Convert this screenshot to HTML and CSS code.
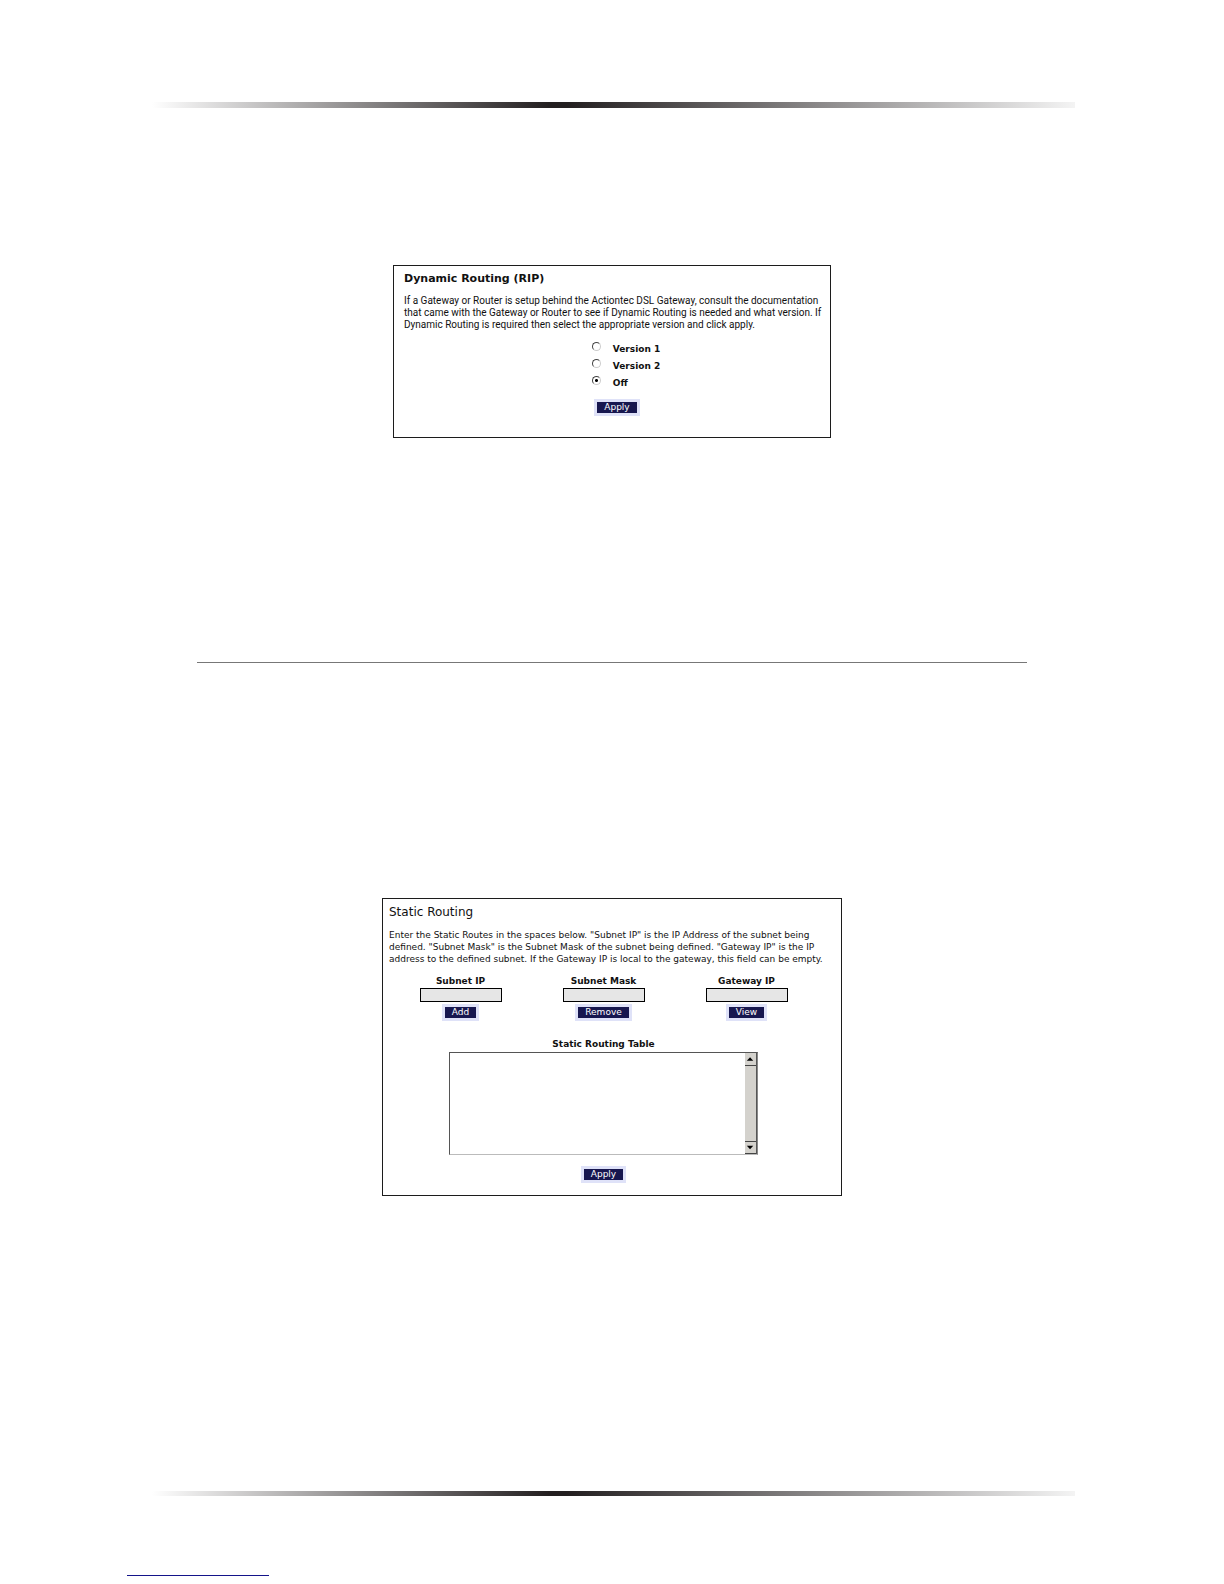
FILE: index.html
```html
<!DOCTYPE html>
<html lang="en">
<head>
  <meta charset="UTF-8" />
  <meta name="viewport" content="width=device-width, initial-scale=1" />
  <title>Dynamic Routing and Static Routing</title>
  <link rel="stylesheet" href="styles.css">
</head>
<body>
  <div class="page-bar"></div>

  <form class="panel dynamic">
    <h2>Dynamic Routing (RIP)</h2>
    <p>
      If a Gateway or Router is setup behind the Actiontec DSL Gateway, consult the documentation<br>
      that came with the Gateway or Router to see if Dynamic Routing is needed and what version. If<br>
      Dynamic Routing is required then select the appropriate version and click apply.
    </p>
    <div class="versions">
      <label><input type="radio" name="rip" value="1"><span>Version 1</span></label>
      <label><input type="radio" name="rip" value="2"><span>Version 2</span></label>
      <label><input type="radio" name="rip" value="off" checked><span>Off</span></label>
    </div>
    <button type="button">Apply</button>
  </form>

  <hr class="divider">

  <form class="panel static">
    <h2>Static Routing</h2>
    <p>
      Enter the Static Routes in the spaces below. "Subnet IP" is the IP Address of the subnet being<br>
      defined. "Subnet Mask" is the Subnet Mask of the subnet being defined. "Gateway IP" is the IP<br>
      address to the defined subnet. If the Gateway IP is local to the gateway, this field can be empty.
    </p>
    <div class="fields">
      <div class="field">
        <label for="subnet-ip">Subnet IP</label>
        <input type="text" id="subnet-ip">
        <button type="button">Add</button>
      </div>
      <div class="field">
        <label for="subnet-mask">Subnet Mask</label>
        <input type="text" id="subnet-mask">
        <button type="button">Remove</button>
      </div>
      <div class="field">
        <label for="gateway-ip">Gateway IP</label>
        <input type="text" id="gateway-ip">
        <button type="button">View</button>
      </div>
    </div>
    <label class="table-label" for="routing-table">Static Routing Table</label>
    <div class="table-box">
      <textarea id="routing-table"></textarea>
      <div class="scroller">
        <svg viewBox="0 0 12 12"><path d="M2 8h7L5.500 4z" /></svg>
        <svg viewBox="0 0 12 12"><path d="M2 4h7L5.500 8z" /></svg>
      </div>
    </div>
    <button type="button">Apply</button>
  </form>

  <div class="page-bar bottom"></div>
  <div class="footer-line"></div>
</body>
</html>
```

FILE: styles.css
```css
* {
  box-sizing: border-box;
}

body {
  margin: 0;
  padding-top: 102px;
  background: #fff;
  color: #111;
  font-family: Verdana, "DejaVu Sans", sans-serif;
  font-size: 9px;
  line-height: 12px;
}

/* Gradient bars at the top and bottom of the page */
.page-bar {
  height: 6px;
  margin: 0 149px 0 152px;
  background: linear-gradient(to right, #fff, #231f20 43%, #231f20 45%, #f4f4f4);
}

.page-bar.bottom {
  height: 5px;
  margin-top: 295px;
}

.divider {
  height: 1px;
  margin: 224px 197px 235px;
  border: 0;
  background: #777;
}

.footer-line {
  width: 142px;
  height: 1px;
  margin: 79px 0 0 127px;
  background: #14148a;
}

/* Panels */
.panel {
  display: flex;
  flex-direction: column;
  align-items: center;
  margin: 0 auto;
  border: 1px solid #1c1c1c;
}

.panel h2,
.panel p {
  align-self: flex-start;
  white-space: nowrap;
}

.panel h2 {
  margin: 5px 0 8px;
  font-size: 11px;
  line-height: 16px;
}

.panel p {
  margin: 0;
}

.dynamic {
  width: 438px;
  margin-top: 157px;
  padding: 0 0 21px 10px;
}

.dynamic p {
  font-family: Roboto, sans-serif;
  font-size: 10px;
}

.static {
  width: 460px;
  padding: 0 23px 12px 6px;
}

.static h2 {
  margin-bottom: 9px;
  font-size: 12px;
  font-weight: normal;
}

button {
  height: 17px;
  padding: 0 7px;
  border: 3px solid #dfe2f8;
  background: #17174f;
  color: #fff;
  font: inherit;
  line-height: 11px;
}

/* Version choices */
.versions {
  margin: 9px 0 8px;
  padding-left: 18px;
}

.versions label {
  display: flex;
  gap: 12px;
  height: 17px;
  font-weight: bold;
}

.versions span {
  padding-top: 3px;
}

.versions input {
  appearance: none;
  width: 9px;
  height: 9px;
  margin: 2px 0 0;
  border: 1px solid;
  border-color: #444 #ccc #ccc #444;
  border-radius: 50%;
}

.versions input:checked {
  background: radial-gradient(circle, #000 1px, #fff 2px);
}

/* Route fields */
.fields {
  display: grid;
  grid-template-columns: repeat(3, 1fr);
  width: 100%;
  margin-top: 10px;
}

.field {
  display: flex;
  flex-direction: column;
  align-items: center;
}

.field label,
.table-label {
  font-weight: bold;
}

.field input {
  width: 82px;
  height: 14px;
  margin: 1px 0 2px;
  border: 1px solid #000;
  background: #e6e6e6;
}

.table-label {
  margin: 17px 0 2px;
}

.table-box {
  display: flex;
  width: 309px;
  height: 103px;
  margin-bottom: 11px;
  border: 1px solid;
  border-color: #555 #888 #bbb #555;
}

.table-box textarea {
  flex: 1;
  padding: 2px;
  border: 0;
  background: #fff;
  resize: none;
}

.scroller {
  display: flex;
  flex-direction: column;
  justify-content: space-between;
  width: 12px;
  border-right: 1px solid #555;
  background: #d4d2cd;
}

.scroller svg {
  height: 13px;
  border-bottom: 1px solid #444;
}

.scroller svg:last-child {
  border-top: 1px solid #444;
}
```
